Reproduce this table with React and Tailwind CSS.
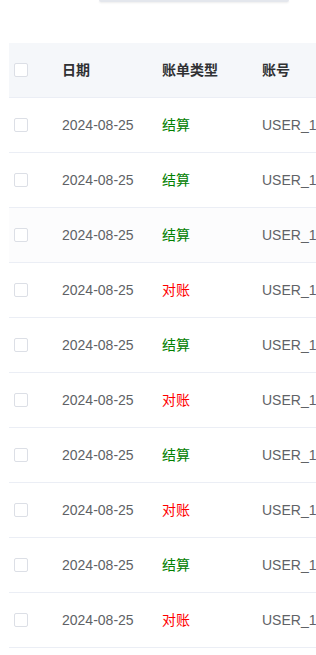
import React from 'react';

const rows = [
    { date: '2024-08-25', type: '结算', account: 'USER_1' },
    { date: '2024-08-25', type: '结算', account: 'USER_1' },
    { date: '2024-08-25', type: '结算', account: 'USER_1' },
    { date: '2024-08-25', type: '对账', account: 'USER_1' },
    { date: '2024-08-25', type: '结算', account: 'USER_1' },
    { date: '2024-08-25', type: '对账', account: 'USER_1' },
    { date: '2024-08-25', type: '结算', account: 'USER_1' },
    { date: '2024-08-25', type: '对账', account: 'USER_1' },
    { date: '2024-08-25', type: '结算', account: 'USER_1' },
    { date: '2024-08-25', type: '对账', account: 'USER_1' },
];

const Box = () => (
    <span className="block w-[14px] h-[14px] rounded-[2px] border border-[#dcdfe6] bg-white" />
);

const App = () => {
    // third row is highlighted (hovered) in the screenshot
    const hovered = 2;

    return (
        <div className="w-[316px] h-[655px] overflow-hidden bg-white" style={{ fontFamily: '"Liberation Sans", Arial, "Noto Sans CJK SC", sans-serif' }}>
            <div className="ml-[99px] w-[190px] h-[2px] rounded-b-[3px] bg-[#e4e7ed] shadow-[0_1px_2px_rgba(0,0,0,0.08)]" />
            <div className="ml-[9px] mt-[41px] w-[400px] text-[14px]">
                <div className="flex h-[55px] items-center bg-[#f5f7fa] border-b border-[#ebeef5] font-bold text-[#303133]">
                    <div className="w-[41px] pl-[5px]"><Box /></div>
                    <div className="w-[100px] pl-[12px]">日期</div>
                    <div className="w-[100px] pl-[12px]">账单类型</div>
                    <div className="w-[100px] pl-[12px]">账号</div>
                </div>
                {rows.map((row, i) => (
                    <div key={i} className={`flex h-[55px] items-center border-b border-[#ebeef5] text-[#606266] ${i === hovered ? 'bg-[#fcfcfd]' : 'bg-white'}`}>
                        <div className="w-[41px] pl-[5px]"><Box /></div>
                        <div className="w-[100px] pl-[12px]">{row.date}</div>
                        <div className={`w-[100px] pl-[12px] ${row.type === '结算' ? 'text-[#008000]' : 'text-[#ff0000]'}`}>{row.type}</div>
                        <div className="w-[100px] pl-[12px]">{row.account}</div>
                    </div>
                ))}
            </div>
        </div>
    );
};

export default App;
